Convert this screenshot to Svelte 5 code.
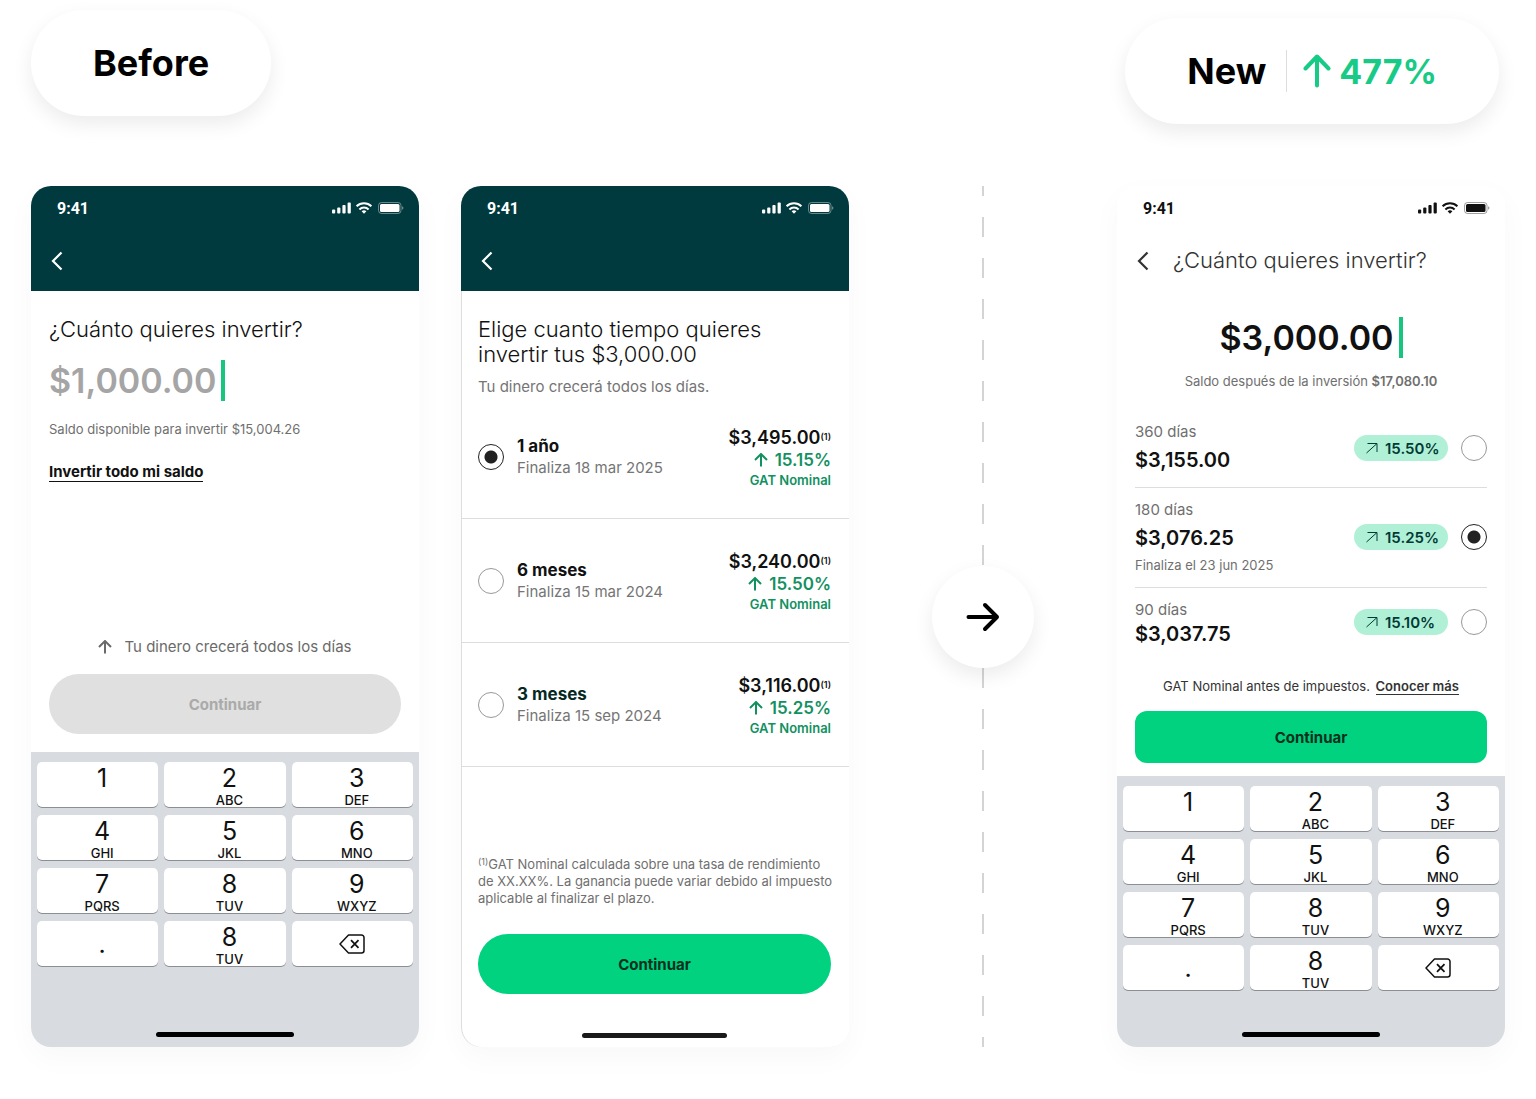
<script>
	const KEYS = [
		['1', ''],
		['2', 'ABC'],
		['3', 'DEF'],
		['4', 'GHI'],
		['5', 'JKL'],
		['6', 'MNO'],
		['7', 'PQRS'],
		['8', 'TUV'],
		['9', 'WXYZ'],
		['.', ''],
		['8', 'TUV'],
		['del', '']
	];

	const plans = [
		{ id: '1y', name: '1 año', ends: 'Finaliza 18 mar 2025', total: '$3,495.00', rate: '15.15%' },
		{ id: '6m', name: '6 meses', ends: 'Finaliza 15 mar 2024', total: '$3,240.00', rate: '15.50%' },
		{ id: '3m', name: '3 meses', ends: 'Finaliza 15 sep 2024', total: '$3,116.00', rate: '15.25%' }
	];

	const terms = [
		{ id: '360', name: '360 días', total: '$3,155.00', rate: '15.50%', ends: '' },
		{ id: '180', name: '180 días', total: '$3,076.25', rate: '15.25%', ends: 'Finaliza el 23 jun 2025' },
		{ id: '90', name: '90 días', total: '$3,037.75', rate: '15.10%', ends: '' }
	];

	let oldAmount = $state('$1,000.00');
	let newAmount = $state('$3,000.00');
	let plan = $state('1y');
	let term = $state('180');
</script>

{#snippet statusBar()}
	<div class="status">
		<span class="time">9:41</span>
		<svg width="72" height="14" viewBox="0 0 72 14" fill="currentColor" aria-hidden="true">
			<rect x="0" y="8.500" width="3.200" height="4" rx="1" />
			<rect x="5.200" y="6.500" width="3.200" height="6" rx="1" />
			<rect x="10.400" y="4" width="3.200" height="8.500" rx="1" />
			<rect x="15.600" y="1.500" width="3.200" height="11" rx="1" />
			<g fill="none" stroke="currentColor" stroke-width="2">
				<path d="M24.600 5.300a10.600 10.600 0 0 1 14.800 0" />
				<path d="M27.400 8.500a6.500 6.500 0 0 1 9.200 0" />
			</g>
			<path d="M29.600 10.300a3.600 3.600 0 0 1 4.800 0L32 12.700z" />
			<rect x="46.500" y="1.500" width="22.500" height="11" rx="3" fill="none" stroke="currentColor" opacity="0.4" />
			<rect x="48" y="3" width="19.500" height="8" rx="1.500" />
			<path d="M70.200 5.200v3.600c1.600-.6 1.600-3 0-3.600z" opacity="0.5" />
		</svg>
	</div>
{/snippet}

{#snippet back()}
	<button class="back" aria-label="Atrás">
		<svg width="14" height="20" viewBox="0 0 14 20" fill="none" stroke="currentColor" stroke-width="2.200">
			<path d="M11.500 1.500 3 10l8.500 8.500" />
		</svg>
	</button>
{/snippet}

{#snippet arrowUp()}
	<svg class="up" width="14" height="14" viewBox="0 0 14 14" fill="none" stroke="currentColor" aria-hidden="true">
		<path d="M7 13.500V1.200M1 7l6-6 6 6" />
	</svg>
{/snippet}

{#snippet keypad(tall)}
	<div class="keypad" class:tall>
		<div class="keys">
			{#each KEYS as [digit, letters]}
				{#if digit === 'del'}
					<button class="key del" aria-label="Borrar">
						<svg width="26" height="20" viewBox="0 0 26 20" fill="none" stroke="currentColor" stroke-width="1.500">
							<path d="M9.500 1h13A2.500 2.500 0 0 1 25 3.500v13a2.500 2.500 0 0 1-2.500 2.500h-13L1 10z" stroke-linejoin="round" />
							<path d="m12 6.200 7.500 7.600M19.500 6.200 12 13.800" stroke-width="1.800" />
						</svg>
					</button>
				{:else}
					<button class="key" class:dot={digit === '.'}>
						<span class="digit">{digit}</span>
						<span class="letters">{letters}</span>
					</button>
				{/if}
			{/each}
		</div>
		<div class="home"></div>
	</div>
{/snippet}

<main>
	<header>
		<h1 class="pill">Before</h1>
		<div class="pill new">
			<h1>New</h1>
			<span class="gain">
				<svg width="28" height="34" viewBox="0 0 28 34" fill="none" stroke="currentColor" stroke-width="4" stroke-linecap="round" stroke-linejoin="round" aria-hidden="true">
					<path d="M14 31.500V3M2.500 14.500 14 2.500l11.500 12" />
				</svg>
				477%
			</span>
		</div>
	</header>

	<div class="board">
		<section class="phone">
			<div class="top dark">
				{@render statusBar()}
				<div class="nav">{@render back()}</div>
			</div>
			<div class="body">
				<h2>¿Cuánto quieres invertir?</h2>
				<div class="amount muted">
					<input aria-label="Monto a invertir" bind:value={oldAmount} />
					<span class="caret"></span>
				</div>
				<p class="note">Saldo disponible para invertir $15,004.26</p>
				<a class="all" href="#todo">Invertir todo mi saldo</a>
				<p class="hint">{@render arrowUp()}Tu dinero crecerá todos los días</p>
				<button class="cta" disabled>Continuar</button>
			</div>
			{@render keypad(true)}
		</section>

		<section class="phone outlined">
			<div class="top dark">
				{@render statusBar()}
				<div class="nav">{@render back()}</div>
			</div>
			<div class="intro">
				<h2>Elige cuanto tiempo quieres invertir tus $3,000.00</h2>
				<p class="sub">Tu dinero crecerá todos los días.</p>
			</div>
			<div class="plans">
				{#each plans as p (p.id)}
					<label class="plan">
						<input type="radio" name="plan" value={p.id} bind:group={plan} />
						<span class="what">
							<b class:green={p.id === '3m'}>{p.name}</b>
							<span>{p.ends}</span>
						</span>
						<span class="yield">
							<b>{p.total}<sup>(1)</sup></b>
							<span class="rate">{@render arrowUp()}{p.rate}</span>
							<span class="gat">GAT Nominal</span>
						</span>
					</label>
				{/each}
			</div>
			<div class="foot">
				<p class="legal">
					<sup>(1)</sup>GAT Nominal calculada sobre una tasa de rendimiento de XX.XX%. La ganancia puede variar debido
					al impuesto aplicable al finalizar el plazo.
				</p>
				<button class="cta">Continuar</button>
				<div class="home wide"></div>
			</div>
		</section>

		<div class="between">
			<div class="circle">
				<svg width="34" height="30" viewBox="0 0 34 30" fill="none" stroke="#000" stroke-width="4" stroke-linecap="round" stroke-linejoin="round" aria-hidden="true">
					<path d="M2.500 15H31M19 3l12 12-12 12" />
				</svg>
			</div>
		</div>

		<section class="phone">
			<div class="top">
				{@render statusBar()}
				<div class="nav">
					{@render back()}
					<h2>¿Cuánto quieres invertir?</h2>
				</div>
			</div>
			<div class="body centered">
				<div class="amount">
					<input aria-label="Monto a invertir" bind:value={newAmount} />
					<span class="caret"></span>
				</div>
				<p class="note">Saldo después de la inversión <b>$17,080.10</b></p>
				<div class="terms">
					{#each terms as t (t.id)}
						<label class="term">
							<span class="info">
								<span class="days">{t.name}</span>
								<b>{t.total}</b>
								{#if t.ends}<span class="ends">{t.ends}</span>{/if}
							</span>
							<span class="badge">
								<svg width="12" height="12" viewBox="0 0 12 12" fill="none" stroke="currentColor" aria-hidden="true">
									<path d="M.5 11 11 1.500M1.500 1.500H11V10" />
								</svg>
								{t.rate}
							</span>
							<input type="radio" name="term" value={t.id} bind:group={term} />
						</label>
					{/each}
				</div>
				<p class="taxes">GAT Nominal antes de impuestos. <a href="#mas">Conocer más</a></p>
				<button class="cta square">Continuar</button>
			</div>
			{@render keypad(false)}
		</section>
	</div>
</main>

<style>
	:global(body) {
		margin: 0;
		background: #fff;
	}
	main {
		padding: 10px 31px 52px;
		font-family: Inter, 'Liberation Sans', sans-serif;
		color: #111;
	}
	h1,
	h2,
	p {
		margin: 0;
	}
	button,
	input {
		font: inherit;
		color: inherit;
		border: 0;
		padding: 0;
		margin: 0;
		background: none;
	}
	a {
		color: inherit;
		text-decoration: none;
		border-bottom: 1px solid;
	}

	header {
		display: flex;
		justify-content: space-between;
		height: 176px;
	}
	.pill {
		height: 106px;
		box-sizing: border-box;
		padding: 0 62px;
		border-radius: 53px;
		box-shadow: 0 8px 20px rgba(0, 0, 0, 0.08);
		display: flex;
		align-items: center;
		font-size: 36px;
		font-weight: 700;
		color: #000;
	}
	.new {
		margin: 8px 6px 0 0;
	}
	.new h1 {
		font-size: 36px;
		line-height: 42px;
		padding-right: 20px;
		border-right: 1px solid #ddd;
	}
	.gain {
		display: flex;
		align-items: center;
		gap: 8px;
		padding-left: 16px;
		font-size: 34px;
		color: #17cb86;
	}

	.board {
		display: grid;
		grid-template-columns: 388fr 42fr 388fr 268fr 388fr;
	}
	.phone {
		display: flex;
		flex-direction: column;
		min-width: 0;
		border-radius: 20px;
		overflow: hidden;
		box-shadow: 0 10px 30px rgba(0, 0, 0, 0.03);
	}
	.outlined {
		grid-column: 3;
		box-shadow:
			inset 1px 0 #ddd,
			0 10px 30px rgba(0, 0, 0, 0.03);
	}
	.top {
		height: 105px;
	}
	.dark {
		background: #003a3e;
		color: #fff;
	}
	.status {
		display: flex;
		justify-content: space-between;
		align-items: center;
		height: 44px;
		padding: 0 15px 0 26px;
	}
	.time {
		font: 700 16px Roboto, sans-serif;
	}
	.nav {
		display: flex;
		align-items: center;
		height: 61px;
		padding-left: 19px;
		color: #333;
	}
	.dark .nav {
		color: #fff;
	}
	.back {
		width: 37px;
		height: 32px;
		display: flex;
		align-items: center;
	}
	h2 {
		font-size: 22px;
		line-height: 25px;
		font-weight: 350;
	}

	.body {
		flex: 1;
		display: flex;
		flex-direction: column;
		align-items: flex-start;
		padding: 26px 18px 18px;
	}
	.amount {
		display: flex;
		align-items: center;
		gap: 5px;
		height: 42px;
		margin-top: 17px;
		font-size: 34px;
		font-weight: 600;
	}
	.amount input {
		field-sizing: content;
		outline: 0;
	}
	.muted {
		color: #a5a5a5;
	}
	.caret {
		width: 4px;
		height: 41px;
		background: #17c57f;
	}
	.note {
		margin-top: 19px;
		font-size: 13px;
		line-height: 18px;
		color: #6f6f6f;
	}
	.note b {
		font-weight: 600;
	}
	.all {
		margin-top: 25px;
		font-size: 15px;
		line-height: 18px;
		font-weight: 700;
	}
	.hint {
		display: flex;
		align-items: center;
		align-self: center;
		gap: 12px;
		margin-top: auto;
		font-size: 15px;
		line-height: 20px;
		color: #6a6a6a;
	}
	.up {
		stroke-width: 2;
		flex: none;
	}
	.cta {
		align-self: stretch;
		width: 100%;
		height: 60px;
		margin-top: 17px;
		border-radius: 30px;
		background: #00d27f;
		color: #06301d;
		font-size: 15px;
		font-weight: 700;
	}
	.cta:disabled {
		background: #e0e0e0;
		color: #aaa;
	}
	.square {
		height: 52px;
		margin-top: 16px;
		border-radius: 12px;
	}

	.keypad {
		background: #d8dce0;
		padding: 10px 6px;
	}
	.keys {
		display: grid;
		grid-template-columns: repeat(3, 1fr);
		grid-auto-rows: 45px;
		gap: 8px 6px;
	}
	.key {
		display: flex;
		flex-direction: column;
		align-items: center;
		padding-left: 9px;
		background: #fff;
		border-radius: 5px;
		box-shadow: 0 1px #8b8e92;
		color: #111;
	}
	.digit {
		font-size: 25px;
		line-height: 32px;
	}
	.letters {
		font-size: 13px;
		line-height: 13px;
		font-weight: 500;
	}
	.dot {
		justify-content: flex-end;
		padding-bottom: 6px;
	}
	.del {
		justify-content: center;
		padding-left: 0;
	}
	.home {
		width: 138px;
		height: 5px;
		margin: 42px auto 0;
		border-radius: 3px;
		background: #000;
	}
	.tall .home {
		margin-top: 66px;
	}
	.home.wide {
		width: 145px;
		margin-top: 39px;
		background: #1a1a1a;
	}

	.intro {
		padding: 26px 60px 0 17px;
	}
	.sub {
		margin-top: 12px;
		font-size: 15px;
		line-height: 16px;
		color: #757575;
	}
	.plan {
		display: flex;
		align-items: center;
		height: 124px;
		box-sizing: border-box;
		padding: 0 18px 0 17px;
		border-bottom: 1px solid #ddd;
	}
	[type='radio'] {
		appearance: none;
		flex: none;
		width: 26px;
		height: 26px;
		border: 1px solid #999;
		border-radius: 50%;
	}
	[type='radio']:checked {
		border-color: #222;
		background: radial-gradient(circle, #222 6px, transparent 7px);
	}
	.what {
		display: flex;
		flex-direction: column;
		flex: 1;
		padding-left: 13px;
		font-size: 15px;
		line-height: 21px;
		color: #757575;
	}
	.what b {
		font-size: 17px;
		font-weight: 700;
		color: #111;
	}
	.what .green {
		color: #05291f;
	}
	.yield {
		display: flex;
		flex-direction: column;
		align-items: flex-end;
		font-size: 17px;
		line-height: 23px;
		font-weight: 600;
		color: #12915f;
	}
	.yield b {
		font-size: 18px;
		font-weight: 600;
		color: #111;
	}
	sup {
		font-size: 9px;
		line-height: 0;
		vertical-align: 4px;
	}
	.rate {
		display: flex;
		align-items: center;
		gap: 7px;
	}
	.gat {
		font-size: 13px;
		line-height: 16px;
	}
	.foot {
		margin-top: auto;
		padding: 0 18px 9px 17px;
	}
	.legal {
		margin-right: -8px;
		font-size: 13px;
		line-height: 17px;
		color: #6f6f6f;
	}
	.foot .cta {
		margin-top: 27px;
	}

	.between {
		display: flex;
		align-items: center;
		justify-content: center;
		background: repeating-linear-gradient(#d4d4d4 0 10px, transparent 10px 31px, #d4d4d4 31px 41px) center / 2px 100% no-repeat;
	}
	.circle {
		display: flex;
		align-items: center;
		justify-content: center;
		width: 102px;
		height: 102px;
		border-radius: 50%;
		background: #fff;
		box-shadow: 0 8px 20px rgba(0, 0, 0, 0.08);
	}

	.nav h2 {
		color: #333;
	}
	.centered {
		align-items: center;
		padding-top: 8px;
		padding-bottom: 13px;
	}
	.centered .note {
		margin-top: 14px;
	}
	.terms {
		align-self: stretch;
		margin-top: 19px;
	}
	.term {
		display: flex;
		align-items: center;
		padding: 11px 0;
	}
	.term + .term {
		padding-top: 10px;
		border-top: 1px solid #ddd;
	}
	.info {
		display: flex;
		flex-direction: column;
		flex: 1;
	}
	.days {
		font-size: 15px;
		line-height: 24px;
		color: #6f6f6f;
	}
	.info b {
		font-size: 20px;
		line-height: 32px;
		font-weight: 600;
	}
	.term:last-child b {
		line-height: 24px;
	}
	.ends {
		font-size: 13px;
		line-height: 22px;
		color: #6f6f6f;
	}
	.badge {
		display: flex;
		align-items: center;
		gap: 7px;
		width: 94px;
		height: 26px;
		box-sizing: border-box;
		padding-left: 12px;
		margin-right: 13px;
		border-radius: 13px;
		background: #b0f0d6;
		color: #003a35;
		font-size: 15px;
		font-weight: 600;
	}
	.taxes {
		margin-top: 20px;
		font-size: 13px;
		line-height: 18px;
		color: #333;
	}
	.taxes a {
		margin-left: 2px;
		font-weight: 600;
	}
</style>
